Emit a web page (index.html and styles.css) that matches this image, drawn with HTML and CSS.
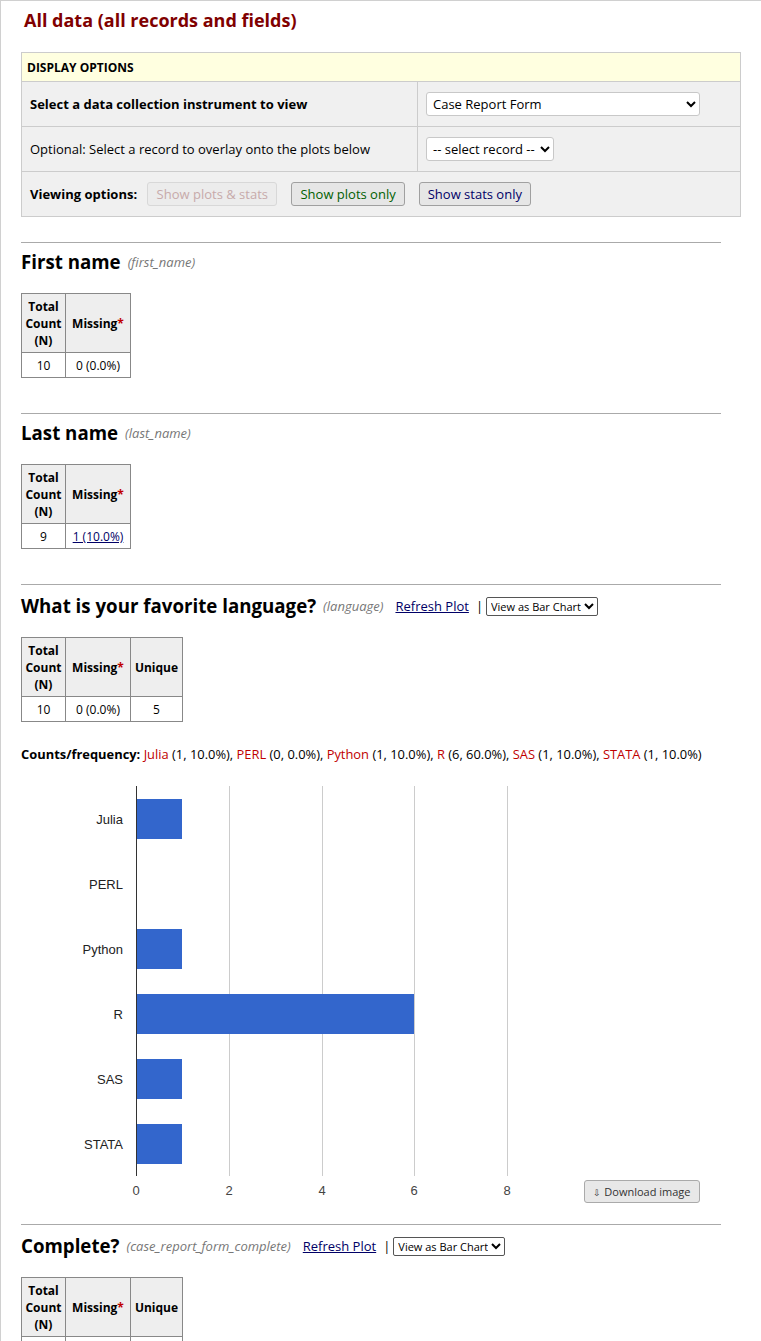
FILE: index.html
```html
<!DOCTYPE html>
<html>
<head>
<meta charset="utf-8">
<link rel="stylesheet" href="styles.css">
</head>
<body>
<div class="page">
  <h1 class="title">All data (all records and fields)</h1>

  <div class="options">
    <div class="opt-head">DISPLAY OPTIONS</div>
    <div class="opt-row">
      <div class="opt-label bold">Select a data collection instrument to view</div>
      <div class="opt-ctrl"><select class="sel sel-wide"><option>Case Report Form</option></select></div>
    </div>
    <div class="opt-row">
      <div class="opt-label">Optional: Select a record to overlay onto the plots below</div>
      <div class="opt-ctrl"><select class="sel"><option>-- select record --</option></select></div>
    </div>
    <div class="opt-row opt-view">
      <span class="bold">Viewing options:</span>
      <button class="btn btn-disabled">Show plots &amp; stats</button>
      <button class="btn btn-green">Show plots only</button>
      <button class="btn btn-navy">Show stats only</button>
    </div>
  </div>

  <section class="field">
    <h2 class="fh"><span class="fname">First name</span> <span class="fvar">(first_name)</span></h2>
    <table class="stats">
      <tr><th class="c1">Total Count (N)</th><th class="c2">Missing<span class="ast">*</span></th></tr>
      <tr><td>10</td><td>0 (0.0%)</td></tr>
    </table>
  </section>

  <section class="field">
    <h2 class="fh"><span class="fname">Last name</span> <span class="fvar">(last_name)</span></h2>
    <table class="stats">
      <tr><th class="c1">Total Count (N)</th><th class="c2">Missing<span class="ast">*</span></th></tr>
      <tr><td>9</td><td><a href="#" class="link">1 (10.0%)</a></td></tr>
    </table>
  </section>

  <section class="field">
    <h2 class="fh ctl"><span class="fname">What is your favorite language?</span> <span class="fvar">(language)</span>
      <a href="#" class="refresh">Refresh Plot</a><span class="pipe">|</span><select class="minisel"><option>View as Bar Chart</option></select></h2>
    <table class="stats">
      <tr><th class="c1">Total Count (N)</th><th class="c2">Missing<span class="ast">*</span></th><th class="c3">Unique</th></tr>
      <tr><td>10</td><td>0 (0.0%)</td><td>5</td></tr>
    </table>
    <p class="counts"><b>Counts/frequency:</b> <span class="red">Julia</span> (1, 10.0%), <span class="red">PERL</span> (0, 0.0%), <span class="red">Python</span> (1, 10.0%), <span class="red">R</span> (6, 60.0%), <span class="red">SAS</span> (1, 10.0%), <span class="red">STATA</span> (1, 10.0%)</p>
    <div class="chart">
      <svg width="700" height="425" viewBox="0 0 700 425" class="chart-svg">
        <g stroke="#cccccc" stroke-width="1">
          <line x1="208.5" y1="7" x2="208.5" y2="397"/>
          <line x1="301.5" y1="7" x2="301.5" y2="397"/>
          <line x1="393.5" y1="7" x2="393.5" y2="397"/>
          <line x1="486.5" y1="7" x2="486.5" y2="397"/>
        </g>
        <g fill="#3366cc">
          <rect x="115" y="20" width="46" height="40"/>
          <rect x="115" y="150" width="46" height="40"/>
          <rect x="115" y="215" width="278" height="40"/>
          <rect x="115" y="280" width="46" height="40"/>
          <rect x="115" y="345" width="46" height="40"/>
        </g>
        <line x1="115.5" y1="7" x2="115.5" y2="397" stroke="#333" stroke-width="1"/>
        <g font-family="Liberation Sans, Arial, sans-serif" font-size="13" fill="#222" text-anchor="end">
          <text x="102" y="45">Julia</text>
          <text x="102" y="110">PERL</text>
          <text x="102" y="175">Python</text>
          <text x="102" y="240">R</text>
          <text x="102" y="305">SAS</text>
          <text x="102" y="370">STATA</text>
        </g>
        <g font-family="Liberation Sans, Arial, sans-serif" font-size="13" fill="#444" text-anchor="middle">
          <text x="115" y="416">0</text>
          <text x="208" y="416">2</text>
          <text x="301" y="416">4</text>
          <text x="393" y="416">6</text>
          <text x="486" y="416">8</text>
        </g>
      </svg>
      <button class="dl"><span class="dl-ic">&#8681;</span> Download image</button>
    </div>
  </section>

  <section class="field after-chart">
    <h2 class="fh ctl"><span class="fname">Complete?</span> <span class="fvar">(case_report_form_complete)</span>
      <a href="#" class="refresh">Refresh Plot</a><span class="pipe">|</span><select class="minisel"><option>View as Bar Chart</option></select></h2>
    <table class="stats">
      <tr><th class="c1">Total Count (N)</th><th class="c2">Missing<span class="ast">*</span></th><th class="c3">Unique</th></tr>
      <tr><td>10</td><td>0 (0.0%)</td><td>3</td></tr>
    </table>
  </section>
</div>
</body>
</html>
```

FILE: styles.css
```css
html, body {
  margin: 0;
  padding: 0;
  background: #fff;
}
body {
  font-family: "Open Sans", "Liberation Sans", Arial, sans-serif;
  font-size: 13px;
  color: #000;
}
.page {
  border-top: 1px solid #d0d0d0;
  border-left: 1px solid #d0d0d0;
  padding: 6px 20px 40px 20px;
  min-height: 1400px;
  box-sizing: border-box;
}
.title {
  margin: 0 0 0 3px;
  font-size: 18px;
  font-weight: 700;
  color: #800000;
  line-height: 26px;
}
.bold { font-weight: 700; }
.options {
  margin-top: 19px;
  width: 720px;
  border: 1px solid #cccccc;
  box-sizing: border-box;
  background: #f0f0f0;
}
.opt-head {
  background: #ffffe0;
  font-weight: 700;
  font-size: 12px;
  padding: 0 5px;
  height: 28px;
  line-height: 30px;
  border-bottom: 1px solid #cccccc;
}
.opt-row {
  display: flex;
  height: 44px;
  align-items: stretch;
  border-bottom: 1px solid #cccccc;
}
.opt-row:last-child { border-bottom: none; }
.opt-label {
  width: 387px;
  padding-left: 8px;
  display: flex;
  align-items: center;
  border-right: 1px solid #cccccc;
}
.opt-ctrl {
  display: flex;
  align-items: center;
  padding-left: 8px;
}
.sel {
  font-family: "Open Sans", "Liberation Sans", Arial, sans-serif;
  font-size: 13px;
  height: 24px;
  color: #000;
  background: #fff;
  border: 1px solid #c8c8c8;
  border-radius: 3px;
  padding: 0 2px;
}
.sel-wide { width: 274px; }
.opt-view {
  align-items: center;
  padding-left: 8px;
  gap: 0;
}
.opt-view .bold { margin-right: 10px; }
.btn {
  font-family: "Open Sans", "Liberation Sans", Arial, sans-serif;
  font-size: 13px;
  height: 24px;
  padding: 0 8px;
  border-radius: 3px;
  background: #e6e6e6;
  border: 1px solid #a0a0a0;
  margin-right: 14px;
}
.btn-disabled {
  color: #c7aaaa;
  border-color: #d8d8d8;
  background: #ececec;
  padding: 0 8.5px;
}
.btn-green { color: #006000; }
.btn-navy { color: #000066; }
.field {
  width: 700px;
  border-top: 1px solid #aaaaaa;
  margin-top: 25px;
  padding-top: 7px;
}
.field + .field { margin-top: 35px; }
.field.after-chart { margin-top: 20px; }
.fh {
  margin: 0;
  font-size: 18.7px;
  line-height: 24px;
  font-weight: 700;
  display: flex;
  align-items: center;
}
.fh.ctl { padding-top: 2px; }
.fname { margin-right: 7px; }
.fvar {
  font-size: 13px;
  font-style: italic;
  font-weight: 400;
  color: #777;
}
.refresh {
  font-size: 13px;
  font-weight: 400;
  color: #000066;
  text-decoration: underline;
  margin-left: 12px;
}
.pipe {
  font-size: 13px;
  font-weight: 400;
  margin: 0 3px 0 7px;
  color: #000;
}
.minisel {
  font-family: "Open Sans", "Liberation Sans", Arial, sans-serif;
  font-size: 11px;
  height: 19px;
  padding: 0;
  border: 1px solid #555;
  border-radius: 2px;
  background: #fff;
  color: #000;
}
.stats {
  margin-top: 19px;
  border-collapse: collapse;
  font-size: 12px;
}
.stats th, .stats td {
  border: 1px solid #888;
  text-align: center;
  padding: 0 3px;
}
.stats th {
  background: #eeeeee;
  font-weight: 700;
  line-height: 17px;
  height: 58px;
}
.stats td {
  height: 24px;
}
.stats .c1 { width: 37px; }
.stats .c2 { width: 58px; }
.stats .c3 { width: 45px; }
.ast { color: #c00000; }
.link { color: #000066; text-decoration: underline; }
.counts {
  margin: 23px 0 0 0;
  font-size: 12.9px;
  line-height: 18px;
  white-space: nowrap;
}
.red { color: #c00000; }
.chart {
  position: relative;
  margin-top: 16px;
  height: 425px;
}
.chart-svg { display: block; }
.dl {
  position: absolute;
  left: 563px;
  top: 401px;
  height: 23px;
  width: 116px;
  font-family: "Open Sans", "Liberation Sans", Arial, sans-serif;
  font-size: 11px;
  color: #333;
  background: #e8e8e8;
  border: 1px solid #aaa;
  border-radius: 3px;
  padding: 0 4px;
}
.dl-ic { font-size: 9px; }
```
